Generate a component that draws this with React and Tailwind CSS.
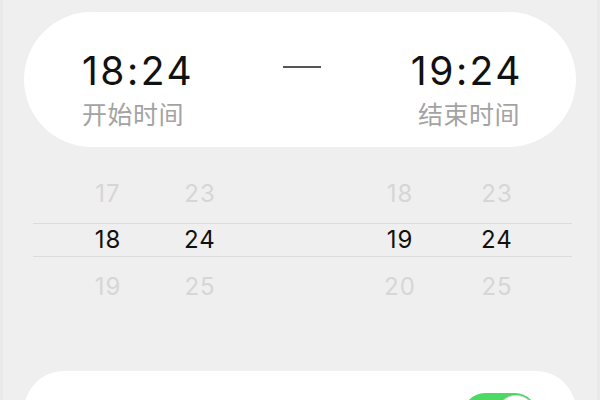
export default function App() {
  const digit = { fontFamily: '"Inter", "Noto Sans", sans-serif' };
  const cjk = { fontFamily: '"Noto Sans CJK SC", "Noto Sans", sans-serif' };
  return (
    <div className="w-[600px] h-[400px] bg-[#efefef] overflow-hidden border-l-[3px] border-r-[3px] border-[#e9e9e9]">
      <div className="mt-[12px] ml-[21px] mr-[21px] h-[135px] rounded-full bg-white flex items-start justify-between pl-[58px] pr-[56px] pt-[35px]">
        <div className="flex flex-col items-start">
          <div className="text-[39px] leading-[48px] text-[#111] tracking-[2.5px]" style={digit}>18:24</div>
          <div className="text-[25px] leading-[28px] text-[#a3a3a3] mt-[4px] tracking-[0.5px]" style={cjk}>开始时间</div>
        </div>
        <div className="w-[38px] h-[2px] bg-[#555] mt-[19px]" />
        <div className="flex flex-col items-end">
          <div className="text-[39px] leading-[48px] text-[#111] tracking-[2.5px] -mr-[3px]" style={digit}>19:24</div>
          <div className="text-[25px] leading-[28px] text-[#a3a3a3] mt-[4px] tracking-[0.5px]" style={cjk}>结束时间</div>
        </div>
      </div>

      <div className="mt-[23px] ml-[30px] w-[539px] text-[24px] tracking-[1px]" style={digit}>
        <div className="h-[53px] pb-[6px] flex items-center pl-[45px] text-[#d6d6d6]">
          <span className="w-[60px] text-center">17</span>
          <span className="w-[60px] text-center ml-[32px]">23</span>
          <span className="w-[60px] text-center ml-[140px]">18</span>
          <span className="w-[60px] text-center ml-[37px]">23</span>
        </div>
        <div className="h-[34px] border-y border-[#dcdcdc] flex items-center pl-[45px] text-[#111]">
          <span className="w-[60px] text-center">18</span>
          <span className="w-[60px] text-center ml-[32px]">24</span>
          <span className="w-[60px] text-center ml-[140px]">19</span>
          <span className="w-[60px] text-center ml-[37px]">24</span>
        </div>
        <div className="h-[53px] pt-[7px] flex items-center pl-[45px] text-[#d6d6d6]">
          <span className="w-[60px] text-center">19</span>
          <span className="w-[60px] text-center ml-[32px]">25</span>
          <span className="w-[60px] text-center ml-[140px]">20</span>
          <span className="w-[60px] text-center ml-[37px]">25</span>
        </div>
      </div>

      <div className="mt-[61px] ml-[21px] mr-[21px] h-[100px] rounded-[40px] bg-white flex justify-end pr-[39px] pt-[22px]">
        <div className="w-[74px] h-[44px] rounded-full bg-[#4cd964] flex items-center justify-end pr-[1px]">
          <div className="w-[40px] h-[40px] rounded-full bg-white border border-[#d8d8d8] shadow-sm" />
        </div>
      </div>
    </div>
  );
}
